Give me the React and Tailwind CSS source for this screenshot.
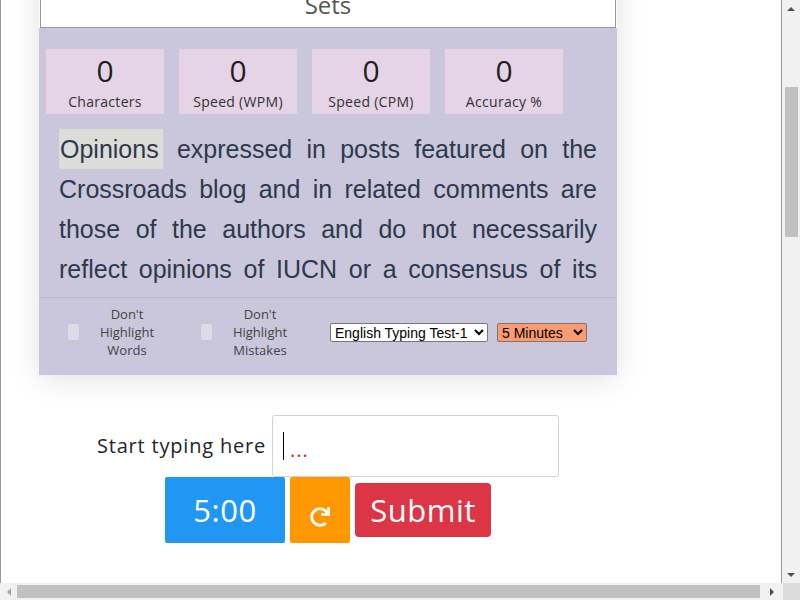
import React from "react";
import { FaRedo } from "react-icons/fa";

const mont = { fontFamily: '"Open Sans", "Noto Sans", sans-serif' };

function Stat({ value, label }) {
  return (
    <div className="w-[118px] h-[65px] bg-[#e4d4e5] flex flex-col items-center">
      <div className="text-[30px] leading-[36px] mt-[4px] text-[#1e1e1e]" style={mont}>{value}</div>
      <div className="text-[14px] leading-[18px] mt-[4px] text-[#333] tracking-[0.3px]" style={mont}>{label}</div>
    </div>
  );
}

export default function App() {
  return (
    <div className="w-[800px] h-[600px] overflow-hidden flex flex-col bg-white">
      <div className="flex flex-1 min-h-0">
        <div className="w-[782px] border-l border-r border-[#9a9a9a] overflow-hidden">
          <div className="w-[654px] mt-[-33px]">
            <div className="ml-[38px] w-[578px] shadow-[0_4px_28px_rgba(0,0,0,0.12)]">
              <div className="mx-[1px] h-[61px] bg-white border border-t-0 border-[#9a9a9a] flex justify-center">
                <span className="mt-[23px] text-[24px] leading-[30px] text-[#555]" style={mont}>Sets</span>
              </div>
              <div className="bg-[#cac6db]">
                <div className="flex gap-[15px] pl-[7px] pt-[21px]">
                  <Stat value="0" label="Characters" />
                  <Stat value="0" label="Speed (WPM)" />
                  <Stat value="0" label="Speed (CPM)" />
                  <Stat value="0" label="Accuracy %" />
                </div>
                <div className="mt-[15px] mx-[20px] h-[160px] overflow-hidden">
                  <p
                    className="text-justify text-[25px] leading-[40px] text-[#2c3a4b]"
                    style={{ fontFamily: '"Liberation Sans", Arial, sans-serif' }}
                  >
                    <span className="inline-block bg-[#dcdcd8] px-[4px] ml-[-3px]">Opinions</span> expressed in posts featured on the Crossroads blog and in related comments are those of the authors and do not necessarily reflect opinions of IUCN or a consensus of its members. The IUCN Crossroads blog is a forum for discussion about conservation and sustainability topics relevant to the world today.
                  </p>
                </div>
                <div className="mt-[8px] border-t border-[#b7b3c9] h-[78px] flex items-center pl-[29px] pb-[9px]">
                  <div className="w-[11px] h-[16px] rounded-[3px] bg-[#dcdce6]" />
                  <div className="ml-[8px] w-[80px] text-center text-[13px] leading-[18px] text-[#444]" style={mont}>
                    Don't<br />Highlight<br />Words
                  </div>
                  <div className="ml-[34px] w-[11px] h-[16px] rounded-[3px] bg-[#dcdce6]" />
                  <div className="ml-[8px] w-[80px] text-center text-[13px] leading-[18px] text-[#444]" style={mont}>
                    Don't<br />Highlight<br />Mistakes
                  </div>
                  <select
                    className="ml-[30px] w-[158px] h-[19px] bg-white border border-[#767676] rounded-[2px] text-[14px] text-black"
                    style={{ fontFamily: '"Liberation Sans", Arial, sans-serif' }}
                    defaultValue="1"
                  >
                    <option value="1">English Typing Test-1</option>
                  </select>
                  <select
                    className="ml-[9px] w-[90px] h-[19px] bg-[#fd9b70] border border-[#767676] rounded-[2px] text-[14px] text-black"
                    style={{ fontFamily: '"Liberation Sans", Arial, sans-serif' }}
                    defaultValue="5"
                  >
                    <option value="5">5 Minutes</option>
                  </select>
                </div>
              </div>
            </div>
            <div className="mt-[40px] flex items-center justify-center">
              <span className="text-[20px] text-[#212529] tracking-[0.8px]" style={mont}>Start typing here</span>
              <div className="ml-[6px] w-[287px] h-[62px] border border-[#ced4da] rounded-[3px] bg-white flex items-center pl-[10px]">
                <div className="w-[1px] h-[28px] bg-black" />
                <span className="ml-[6px] mt-[8px] text-[20px] text-[#e0201e] leading-none tracking-[1px]" style={mont}>...</span>
              </div>
            </div>
            <div className="flex items-center justify-center gap-[5px]">
              <div className="w-[120px] h-[66px] bg-[#2196f3] rounded-[2px] flex items-center justify-center text-white text-[31px] tracking-[0.5px]" style={mont}>
                5:00
              </div>
              <div className="w-[60px] h-[66px] bg-[#ff9800] rounded-[2px] flex items-center justify-center pt-[14px] text-white">
                <FaRedo size={20} />
              </div>
              <div className="w-[136px] h-[54px] bg-[#dc3545] rounded-[4px] flex items-center justify-center text-white text-[31px] tracking-[0.5px]" style={mont}>
                Submit
              </div>
            </div>
          </div>
        </div>
        <div className="w-[18px] bg-[#f1f1f1] flex flex-col items-center">
          <div className="h-[17px] flex items-center justify-center">
            <div className="w-0 h-0 border-l-[4px] border-r-[4px] border-b-[4px] border-l-transparent border-r-transparent border-b-[#505050]" />
          </div>
          <div className="mt-[70px] w-[13px] h-[150px] bg-[#c1c1c1]" />
          <div className="flex-1" />
          <div className="h-[17px] flex items-center justify-center">
            <div className="w-0 h-0 border-l-[4px] border-r-[4px] border-t-[4px] border-l-transparent border-r-transparent border-t-[#505050]" />
          </div>
        </div>
      </div>
      <div className="h-[17px] flex">
        <div className="w-[783px] bg-[#f1f1f1] flex items-center">
          <div className="w-[17px] flex items-center justify-center">
            <div className="w-0 h-0 border-t-[4px] border-b-[4px] border-r-[4px] border-t-transparent border-b-transparent border-r-[#a3a3a3]" />
          </div>
          <div className="w-[743px] h-[13px] bg-[#c1c1c1]" />
          <div className="flex-1 flex items-center justify-center">
            <div className="w-0 h-0 border-t-[4px] border-b-[4px] border-l-[4px] border-t-transparent border-b-transparent border-l-[#505050]" />
          </div>
        </div>
        <div className="flex-1 bg-[#dcdcdc]" />
      </div>
    </div>
  );
}
